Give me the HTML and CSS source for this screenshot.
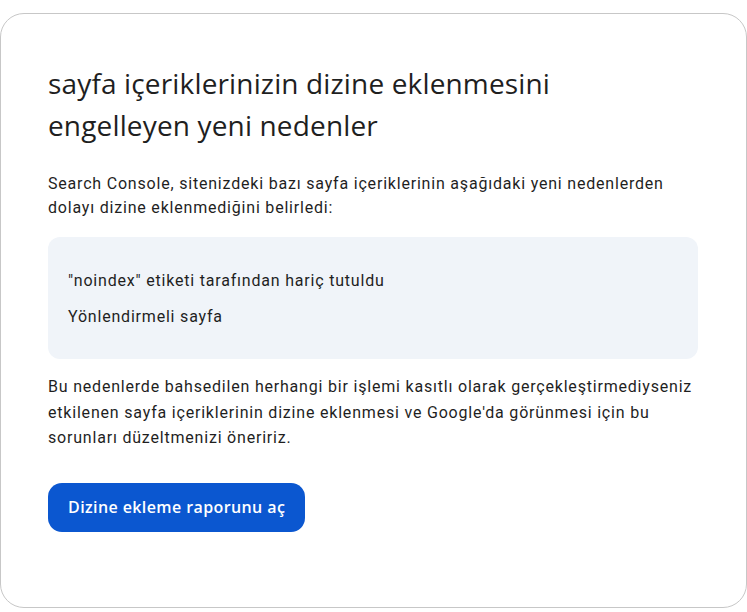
FILE: index.html
```html
<!DOCTYPE html>
<html lang="tr">
<head>
<meta charset="utf-8">
<link rel="stylesheet" href="styles.css">
</head>
<body>
<div class="card">
  <h1 class="title">sayfa içeriklerinizin dizine eklenmesini engelleyen yeni nedenler</h1>
  <p class="text">Search Console, sitenizdeki bazı sayfa içeriklerinin aşağıdaki yeni nedenlerden dolayı dizine eklenmediğini belirledi:</p>
  <div class="reasons">
    <div class="reason">"noindex" etiketi tarafından hariç tutuldu</div>
    <div class="reason">Yönlendirmeli sayfa</div>
  </div>
  <p class="text text-2">Bu nedenlerde bahsedilen herhangi bir işlemi kasıtlı olarak gerçekleştirmediyseniz etkilenen sayfa içeriklerinin dizine eklenmesi ve Google'da görünmesi için bu sorunları düzeltmenizi öneririz.</p>
  <a class="button" href="#">Dizine ekleme raporunu aç</a>
</div>
</body>
</html>
```
FILE: styles.css
```css
html, body {
  margin: 0;
  padding: 0;
  background: #ffffff;
}
body {
  padding-top: 13px;
  font-family: Roboto, "Liberation Sans", sans-serif;
  color: #1f1f1f;
}
.card {
  box-sizing: border-box;
  width: 747px;
  height: 595px;
  border: 1px solid #c7c7c7;
  border-radius: 24px;
  padding: 48px 48px 0 47px;
}
.title {
  margin: 0;
  font-family: "Open Sans", "Noto Sans", sans-serif;
  font-weight: 400;
  font-size: 28px;
  line-height: 42px;
  letter-spacing: 0.15px;
  color: #1f1f1f;
  width: 580px;
}
.text {
  margin: 26px 0 0;
  font-size: 16px;
  line-height: 24px;
  letter-spacing: 0.8px;
  color: #1f1f1f;
}
.reasons {
  margin-top: 17px;
  background: #f0f4f9;
  border-radius: 12px;
  padding: 32px 20px 30px;
  display: flex;
  flex-direction: column;
  gap: 12px;
}
.reason {
  font-size: 16px;
  line-height: 24px;
  letter-spacing: 0.8px;
}
.text-2 {
  margin-top: 15px;
  line-height: 25.6px;
}
.button {
  display: inline-flex;
  align-items: center;
  margin-top: 32px;
  height: 49px;
  padding: 0 20px;
  background: #0b57d0;
  color: #ffffff;
  border-radius: 14px;
  text-decoration: none;
  font-family: "Open Sans", "Noto Sans", sans-serif;
  font-weight: 600;
  font-size: 16px;
  letter-spacing: 0.4px;
}
```
